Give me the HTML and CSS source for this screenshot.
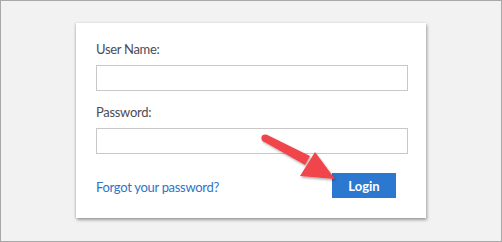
FILE: index.html
```html
<!DOCTYPE html>
<html lang="en">
<head>
  <meta charset="UTF-8">
  <title>Login</title>
  <link rel="stylesheet" href="styles.css">
</head>
<body>
  <div class="frame">
    <div class="card">
      <label class="field-label">User Name:</label>
      <input class="field-input" type="text">
      <label class="field-label second">Password:</label>
      <input class="field-input" type="password">
      <div class="actions">
        <a class="forgot" href="#">Forgot your password?</a>
        <button class="login-btn">Login</button>
      </div>
      <svg class="arrow" width="110" height="70" viewBox="0 0 110 70">
        <defs>
          <filter id="shadow" x="-20%" y="-20%" width="140%" height="140%">
            <feDropShadow dx="1" dy="1.5" stdDeviation="1.2" flood-color="#000" flood-opacity="0.35"/>
          </filter>
        </defs>
        <g filter="url(#shadow)" fill="#f0444b">
          <circle cx="10" cy="14" r="3.6"/>
          <polygon points="8.2,17.2 11.8,10.8 55,32 50,41"/>
          <polygon points="60,28 45,52 80,55"/>
        </g>
      </svg>
    </div>
  </div>
</body>
</html>
```

FILE: styles.css
```css
html, body {
  margin: 0;
  padding: 0;
}

body {
  font-family: "Source Sans Pro", Lato, "Noto Sans", sans-serif;
  background-color: #f2f2f2;
}

.frame {
  box-sizing: border-box;
  width: 502px;
  height: 242px;
  border: 1px solid #a8a8a8;
  padding-top: 22px;
}

.card {
  position: relative;
  box-sizing: border-box;
  width: 350px;
  height: 195px;
  margin-left: 75px;
  padding: 16px 18px 0 20px;
  background-color: #fff;
  box-shadow: 1px 2px 3px rgba(0, 0, 0, 0.35), -1px 0 2px rgba(0, 0, 0, 0.12);
}

.field-label {
  display: block;
  height: 20px;
  line-height: 20px;
  font-size: 13px;
  letter-spacing: -0.3px;
  color: #4b4b55;
  margin-bottom: 6px;
}

.field-label.second {
  margin-top: 11px;
}

.field-input {
  display: block;
  box-sizing: border-box;
  width: 312px;
  height: 26px;
  margin: 0;
  border: 1px solid #c8c8c8;
  background-color: #fff;
}

.actions {
  display: flex;
  align-items: center;
  justify-content: space-between;
  width: 300px;
  margin-top: 19px;
}

.forgot {
  font-size: 13px;
  letter-spacing: -0.3px;
  color: #3173c5;
  text-decoration: none;
  margin-top: 2px;
}

.login-btn {
  width: 64px;
  height: 25px;
  border: none;
  padding: 0;
  background-color: #2a78d0;
  color: #fff;
  font-family: inherit;
  font-size: 13px;
  font-weight: bold;
}

.arrow {
  position: absolute;
  left: 179px;
  top: 101px;
}
```
